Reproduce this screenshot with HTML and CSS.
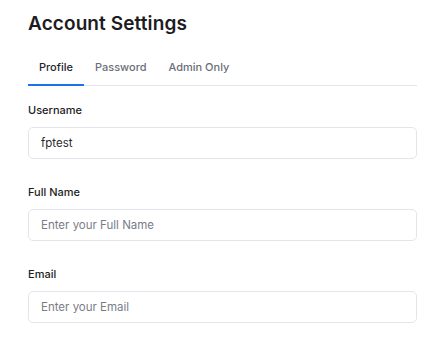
FILE: index.html
```html
<!DOCTYPE html>
<html lang="en">
<head>
    <meta charset="UTF-8">
    <meta name="viewport" content="width=device-width, initial-scale=1.0">
    <title>Account Settings</title>
    <link rel="stylesheet" href="styles.css">
</head>
<body>
    <div class="settings">
        <h1>Account Settings</h1>

        <!-- Tabs -->
        <div class="tabs">
            <div class="tab active">Profile</div>
            <div class="tab">Password</div>
            <div class="tab">Admin Only</div>
        </div>

        <form class="profile-form">
            <div class="field">
                <label for="username">Username</label>
                <input type="text" id="username" value="fptest">
            </div>
            <div class="field">
                <label for="fullname">Full Name</label>
                <input type="text" id="fullname" placeholder="Enter your Full Name">
            </div>
            <div class="field">
                <label for="email">Email</label>
                <input type="text" id="email" placeholder="Enter your Email">
            </div>
        </form>
    </div>
</body>
</html>
```

FILE: styles.css
```css
body {
    margin: 0;
    font-family: Inter, "Open Sans", sans-serif;
    background-color: white;
    color: #1c1c22;
}

.settings {
    padding: 12px 29px 0 28px;
}

h1 {
    margin: 0;
    font-size: 19px;
    font-weight: 600;
    line-height: 24px;
    letter-spacing: 0.1px;
}

.tabs {
    display: flex;
    margin-top: 17px;
    border-bottom: 1px solid #e3e6ee;
}

.tab {
    padding: 6px 11px 10px;
    font-size: 11px;
    font-weight: 500;
    line-height: 16px;
    color: #6b6e78;
}

.tab.active {
    color: #26272d;
    box-shadow: inset 0 -2px 0 #1a73e8;
    margin-bottom: -1px;
    padding-bottom: 11px;
}

.profile-form {
    display: flex;
    flex-direction: column;
    gap: 25px;
    margin-top: 16px;
}

.field {
    display: flex;
    flex-direction: column;
    gap: 9px;
}

label {
    font-size: 11px;
    font-weight: 500;
    line-height: 16px;
    color: #1c1c22;
}

input {
    height: 32px;
    box-sizing: border-box;
    border: 1px solid #e2e5ec;
    border-radius: 5px;
    padding: 0 12px;
    font-family: inherit;
    font-size: 11.5px;
    color: #2a2b31;
    outline: none;
}

input::placeholder {
    color: #7a7d88;
}
```
